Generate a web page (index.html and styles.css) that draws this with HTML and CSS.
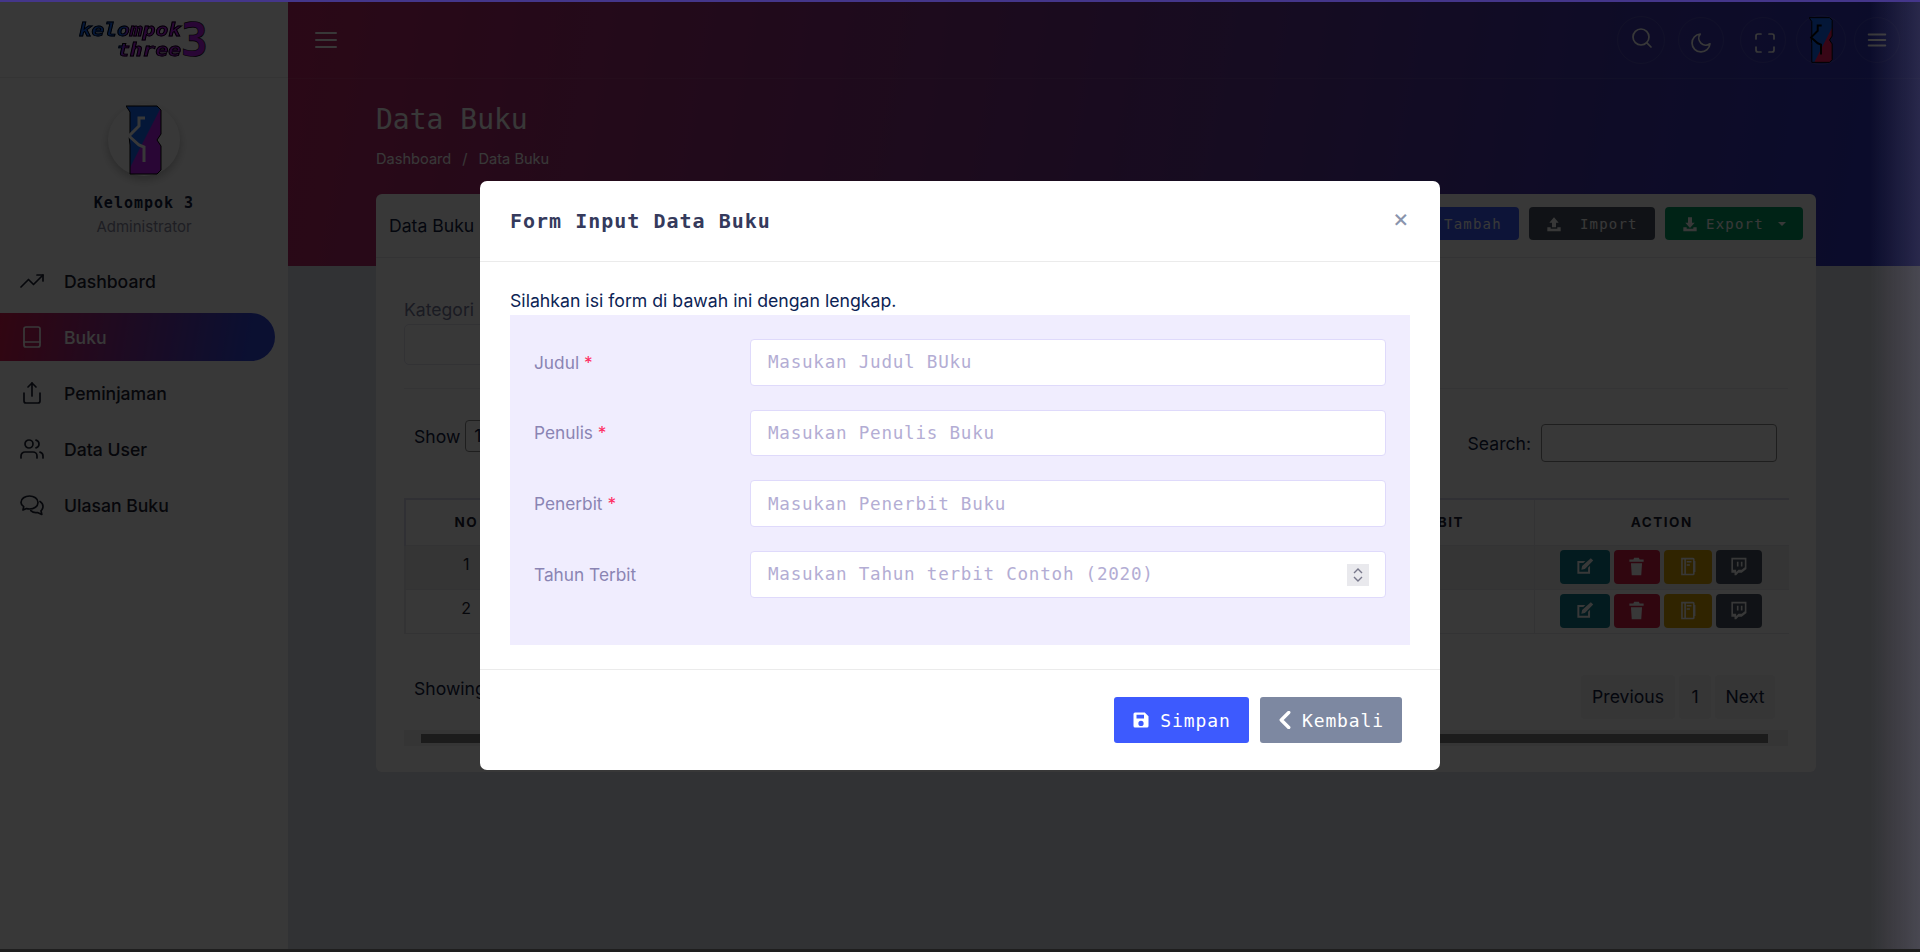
FILE: index.html
```html
<!DOCTYPE html>
<html lang="en">
<head>
  <meta charset="UTF-8" />
  <meta name="viewport" content="width=device-width, initial-scale=1.0"/>
  <title>Data Buku</title>
  <link rel="stylesheet" href="styles.css">
</head>
<body>
  <svg class="defs" width="0" height="0">
    <defs>
      <linearGradient id="emblemFill" x1="0" y1="0" x2="1" y2="1">
        <stop offset="0.5" stop-color="#1668ff"/>
        <stop offset="0.52" stop-color="#b91ef0"/>
      </linearGradient>
      <linearGradient id="emblemFillRed" x1="0" y1="0" x2="1" y2="1">
        <stop offset="0.6" stop-color="#1668ff"/>
        <stop offset="0.62" stop-color="#ff1f66"/>
      </linearGradient>
    </defs>
  </svg>

  <div class="layout">
    <aside class="sidebar">
      <div class="brand">
        <div class="wordmark">
          <div class="wordmark-text">
            <span>kelompok</span>
            <span>three</span>
          </div>
          <span class="wordmark-num">3</span>
        </div>
      </div>
      <div class="profile">
        <div class="avatar">
          <svg class="emblem" width="36" height="70" viewBox="0 0 36 70">
            <path d="M0 1H31L35 5V29L31 35L35 41V65L31 69H4V40L3 31L4 30V7z" fill="url(#emblemFill)" stroke="#000" stroke-width="1"/>
            <path d="M19 13H13V21L3 31L13 40L18 42V57" fill="none" stroke="#fff" stroke-width="3"/>
          </svg>
        </div>
        <div class="profile-name">Kelompok 3</div>
        <div class="profile-role">Administrator</div>
      </div>
      <nav class="menu">
        <a class="menu-item">
          <svg class="ico" viewBox="0 0 24 24"><polyline points="23 6 13.5 15.5 8.5 10.5 1 18"/><polyline points="17 6 23 6 23 12"/></svg>
          Dashboard
        </a>
        <a class="menu-item active">
          <svg class="ico" viewBox="0 0 24 24"><rect x="4" y="2" width="16" height="20" rx="2"/><line x1="4" y1="17" x2="20" y2="17"/></svg>
          Buku
        </a>
        <a class="menu-item">
          <svg class="ico" viewBox="0 0 24 24"><path d="M4 12v8a2 2 0 0 0 2 2h12a2 2 0 0 0 2-2v-8"/><polyline points="16 6 12 2 8 6"/><line x1="12" y1="2" x2="12" y2="15"/></svg>
          Peminjaman
        </a>
        <a class="menu-item">
          <svg class="ico" viewBox="0 0 24 24"><path d="M17 21v-2a4 4 0 0 0-4-4H5a4 4 0 0 0-4 4v2"/><circle cx="9" cy="7" r="4"/><path d="M23 21v-2a4 4 0 0 0-3-3.87"/><path d="M16 3.13a4 4 0 0 1 0 7.75"/></svg>
          Data User
        </a>
        <a class="menu-item">
          <svg class="ico" viewBox="0 0 24 24"><path d="M1 9.5C1 5.5 5 3 9.5 3S18 5.5 18 9.5 14 16 9.5 16c-1 0-2-.1-3-.5L3 17l.7-3.4C2 12.500 1 11 1 9.500z"/><path d="M20 8.500c2 1.200 3 3 3 5 0 1.700-.8 3.200-2 4.300l.8 3.700-4.300-2c-2.500.5-5-.2-6.700-1.800"/></svg>
          Ulasan Buku
        </a>
      </nav>
    </aside>

    <main class="main">
      <section class="hero">
        <div class="topbar">
          <svg class="ico burger" viewBox="0 0 24 24"><line x1="2" y1="5" x2="22" y2="5"/><line x1="2" y1="12" x2="22" y2="12"/><line x1="2" y1="19" x2="22" y2="19"/></svg>
          <div class="top-actions">
            <span class="round round-search"><svg class="ico" viewBox="0 0 24 24"><circle cx="11" cy="11" r="8"/><line x1="21" y1="21" x2="16.650" y2="16.650"/></svg></span>
            <span class="round round-moon"><svg class="ico" viewBox="0 0 24 24"><path d="M21 12.790A9 9 0 1 1 11.210 3 7 7 0 0 0 21 12.790z"/></svg></span>
            <span class="round round-full"><svg class="ico" viewBox="0 0 24 24"><path d="M8 3H5a2 2 0 0 0-2 2v3m18 0V5a2 2 0 0 0-2-2h-3m0 18h3a2 2 0 0 0 2-2v-3M3 16v3a2 2 0 0 0 2 2h3"/></svg></span>
            <span class="round round-user">
              <svg width="24" height="46" viewBox="0 0 36 70">
                <path d="M0 1H31L35 5V29L31 35L35 41V65L31 69H4V40L3 31L4 30V7z" fill="url(#emblemFillRed)" stroke="#000" stroke-width="1.500"/>
                <path d="M19 13H13V21L3 31L13 40L18 42V57" fill="none" stroke="#000" stroke-width="3"/>
              </svg>
            </span>
            <span class="round round-menu"><svg class="ico ico-sm" viewBox="0 0 24 24"><line x1="3" y1="6" x2="21" y2="6"/><line x1="3" y1="12" x2="21" y2="12"/><line x1="3" y1="18" x2="21" y2="18"/></svg></span>
          </div>
        </div>
        <h1 class="page-title">Data Buku</h1>
        <div class="crumbs"><span>Dashboard</span><span>/</span><span>Data Buku</span></div>
      </section>

      <section class="card">
        <div class="card-head">
          <span class="card-title">Data Buku</span>
          <div class="card-tools">
            <a class="btn btn-blue">Tambah</a>
            <a class="btn btn-dark">
              <svg class="fill-ico" viewBox="0 0 24 24"><path d="M12 2l7 8h-4v7H9v-7H5zM2 17h5v2h10v-2h5v6H2z"/></svg>
              &nbsp;Import
            </a>
            <a class="btn btn-green">
              <svg class="fill-ico" viewBox="0 0 24 24"><path d="M9 2h6v8h4l-7 8-7-8h4zM2 17h5v2h10v-2h5v6H2z"/></svg>
              Export <span class="caret"></span>
            </a>
          </div>
        </div>
        <div class="card-body">
          <div class="filter">
            <label class="filter-label">Kategori</label>
            <div class="filter-box"></div>
          </div>
          <div class="dt-top">
            <div class="dt-show">Show <span class="dt-select">10</span></div>
            <div class="dt-search">Search: <span class="dt-input"></span></div>
          </div>
          <table class="dt">
            <colgroup>
              <col class="c-no"><col class="c-wide"><col class="c-wide2"><col class="c-pub"><col class="c-act">
            </colgroup>
            <thead>
              <tr><th>NO</th><th>JUDUL</th><th>PENULIS</th><th>PENERBIT</th><th>ACTION</th></tr>
            </thead>
            <tbody>
              <tr class="odd">
                <td class="num">1</td><td></td><td></td><td></td>
                <td>
                  <div class="acts">
                    <span class="act act-teal"><svg class="fill-ico" viewBox="0 0 24 24"><path d="M3 5h10l-2.500 2.500H5.500v11h11v-5L19 11v10H3zM20 1.500l3 3L12.500 15 8 16l1-4.500z"/></svg></span>
                    <span class="act act-red"><svg class="fill-ico" viewBox="0 0 24 24"><path d="M9 1h6l1 2h5v3H3V3h5zM5 8h14l-1 15H6z"/></svg></span>
                    <span class="act act-yellow"><svg class="fill-ico" viewBox="0 0 24 24"><path fill-rule="evenodd" d="M4 1h15a2 2 0 0 1 2 2v2h1v14h-1v2a2 2 0 0 1-2 2H4zM6 3v18h2V3zM10 3v18h9V3zM11 5h6v2h-6zM11 9h4v2h-4z"/></svg></span>
                    <span class="act act-dark"><svg class="fill-ico" viewBox="0 0 24 24"><path fill-rule="evenodd" d="M3 1h19v14l-6 5h-4l-3 3H7v-3H3zM5 3v13h4v3l3-3h4l4-3V3zM10 6h2v6h-2zM15 6h2v6h-2z"/></svg></span>
                  </div>
                </td>
              </tr>
              <tr>
                <td class="num">2</td><td></td><td></td><td></td>
                <td>
                  <div class="acts">
                    <span class="act act-teal"><svg class="fill-ico" viewBox="0 0 24 24"><path d="M3 5h10l-2.500 2.500H5.500v11h11v-5L19 11v10H3zM20 1.500l3 3L12.500 15 8 16l1-4.500z"/></svg></span>
                    <span class="act act-red"><svg class="fill-ico" viewBox="0 0 24 24"><path d="M9 1h6l1 2h5v3H3V3h5zM5 8h14l-1 15H6z"/></svg></span>
                    <span class="act act-yellow"><svg class="fill-ico" viewBox="0 0 24 24"><path fill-rule="evenodd" d="M4 1h15a2 2 0 0 1 2 2v2h1v14h-1v2a2 2 0 0 1-2 2H4zM6 3v18h2V3zM10 3v18h9V3zM11 5h6v2h-6zM11 9h4v2h-4z"/></svg></span>
                    <span class="act act-dark"><svg class="fill-ico" viewBox="0 0 24 24"><path fill-rule="evenodd" d="M3 1h19v14l-6 5h-4l-3 3H7v-3H3zM5 3v13h4v3l3-3h4l4-3V3zM10 6h2v6h-2zM15 6h2v6h-2z"/></svg></span>
                  </div>
                </td>
              </tr>
            </tbody>
          </table>
          <div class="dt-bottom">
            <div class="dt-info">Showing 1 to 2 of 2 entries</div>
            <div class="pager">
              <span class="page page-prev">Previous</span>
              <span class="page page-num">1</span>
              <span class="page page-next">Next</span>
            </div>
          </div>
          <div class="hscroll"><div class="hscroll-thumb"></div></div>
        </div>
      </section>
    </main>
  </div>

  <div class="backdrop"></div>
  <div class="edge-glow"></div>
  <div class="top-line"></div>

  <div class="modal">
    <div class="modal-head">
      <h2 class="modal-title">Form Input Data Buku</h2>
      <span class="modal-close">&times;</span>
    </div>
    <div class="modal-body">
      <p class="modal-intro">Silahkan isi form di bawah ini dengan lengkap.</p>
      <form class="form-box">
        <div class="form-row">
          <label class="form-label">Judul <span class="req">*</span></label>
          <input class="form-input" type="text" placeholder="Masukan Judul BUku">
        </div>
        <div class="form-row">
          <label class="form-label">Penulis <span class="req">*</span></label>
          <input class="form-input" type="text" placeholder="Masukan Penulis Buku">
        </div>
        <div class="form-row">
          <label class="form-label">Penerbit <span class="req">*</span></label>
          <input class="form-input" type="text" placeholder="Masukan Penerbit Buku">
        </div>
        <div class="form-row">
          <label class="form-label">Tahun Terbit</label>
          <div class="number-wrap">
            <input class="form-input" type="text" placeholder="Masukan Tahun terbit Contoh (2020)">
            <span class="spinner">
              <svg width="10" height="16" viewBox="0 0 10 16"><polyline points="1 6 5 2 9 6"/><polyline points="1 10 5 14 9 10"/></svg>
            </span>
          </div>
        </div>
      </form>
    </div>
    <div class="modal-foot">
      <button class="mbtn mbtn-save" type="button">
        <svg class="mbtn-ico" viewBox="0 0 24 24"><path fill-rule="evenodd" d="M4 2h13l5 5v13a2 2 0 0 1-2 2H4a2 2 0 0 1-2-2V4a2 2 0 0 1 2-2zM6 5v5h10V5zM12 13a3.500 3.500 0 1 0 0 7 3.500 3.500 0 0 0 0-7z"/></svg>
        Simpan
      </button>
      <button class="mbtn mbtn-back" type="button">
        <svg class="mbtn-ico" viewBox="0 0 24 24"><polyline class="chev" points="17 2 7 12 17 22"/></svg>
        Kembali
      </button>
    </div>
  </div>
</body>
</html>
```

FILE: styles.css
```css
* {
  box-sizing: border-box;
}

body {
  margin: 0;
  height: 952px;
  overflow: hidden;
  font-family: Inter, Roboto, sans-serif;
  font-size: 16px;
  color: #12203f;
  background-color: #8a8a8a;
}

.defs {
  position: absolute;
}

.layout {
  display: flex;
  height: 949px;
  padding-top: 2px;
  background-color: #dfe1ea;
}

/* sidebar */
.sidebar {
  width: 288px;
  flex-shrink: 0;
  background-color: #fff;
}

.brand {
  height: 76px;
  padding-top: 17px;
  border-bottom: 1px solid #ececec;
}

.wordmark {
  display: flex;
  justify-content: center;
  align-items: center;
  height: 42px;
}

.wordmark-text {
  display: flex;
  flex-direction: column;
  align-items: flex-end;
  width: 100px;
  font-family: "DejaVu Sans Mono", monospace;
  font-weight: 700;
  font-style: italic;
  font-size: 17px;
  line-height: 20px;
  white-space: nowrap;
  color: transparent;
  background: linear-gradient(100deg, #1668ff 52%, #b91ef0 56%);
  -webkit-background-clip: text;
  background-clip: text;
  -webkit-text-stroke: 0.8px #000;
  transform: scaleX(1.25);
  transform-origin: right center;
}

.wordmark-num {
  width: 27px;
  font-family: "DejaVu Sans Mono", monospace;
  font-weight: 700;
  font-size: 46px;
  line-height: 40px;
  color: #b91ef0;
  -webkit-text-stroke: 0.6px #000;
}

.profile {
  display: flex;
  flex-direction: column;
  align-items: center;
  padding-top: 26px;
}

.avatar {
  width: 72px;
  height: 72px;
  border-radius: 50%;
  background-color: #fff;
  box-shadow: 0 4px 10px rgba(0, 0, 0, .25);
  display: flex;
  justify-content: center;
  align-items: center;
}

.emblem {
  margin-top: -2px;
  margin-bottom: -2px;
}

.profile-name {
  margin-top: 15px;
  font-family: "DejaVu Sans Mono", monospace;
  font-size: 15px;
  font-weight: 700;
  letter-spacing: 1px;
  line-height: 24px;
}

.profile-role {
  margin-top: 2px;
  font-size: 15px;
  line-height: 20px;
  color: #8a8aa0;
}

.menu {
  margin-top: 20px;
}

.menu-item {
  display: flex;
  align-items: center;
  gap: 20px;
  width: 275px;
  height: 48px;
  margin-bottom: 8px;
  padding-left: 20px;
  border-radius: 0 24px 24px 0;
  font-size: 17.6px;
  font-weight: 500;
  color: #1d2333;
}

.menu-item.active {
  color: #fff;
  background: linear-gradient(100deg, #e01a50, #3248e0 90%);
}

.ico {
  width: 24px;
  height: 24px;
  flex-shrink: 0;
  fill: none;
  stroke: currentColor;
  stroke-width: 1.7;
  stroke-linecap: round;
  stroke-linejoin: round;
}

/* header strip */
.main {
  flex: 1;
  min-width: 0;
  position: relative;
}

.hero {
  height: 264px;
  color: #fff;
  background: linear-gradient(100deg, #c02868 0%, #7a3488 45%, #423ab0 80%, #3038c8 100%);
}

.topbar {
  display: flex;
  justify-content: space-between;
  align-items: center;
  height: 77px;
  padding: 0 20px 0 26px;
  border-bottom: 1px solid rgba(255, 255, 255, .08);
}

.burger {
  stroke-width: 2;
}

.top-actions {
  display: flex;
  align-items: center;
  color: #fff;
}

.round {
  display: flex;
  justify-content: center;
  align-items: center;
  width: 46px;
  height: 46px;
  border: 1px solid rgba(255, 255, 255, .1);
  border-radius: 50%;
}

.round-search {
  width: 48px;
  height: 48px;
}

.round-search .ico {
  margin: -5px 0 0 2px;
}

.round-moon {
  margin-left: 13px;
}

.round-moon .ico {
  margin-top: 6px;
}

.round-full {
  margin-left: 16px;
}

.round-full .ico {
  margin: 6px 0 0 4px;
}

.round-user {
  width: 50px;
  height: 50px;
  margin-left: 10px;
}

.round-menu {
  margin-left: 8px;
}

.ico-sm {
  width: 22px;
  height: 22px;
  stroke-width: 2.2;
}

.page-title {
  margin: 21px 0 0 88px;
  font-family: "DejaVu Sans Mono", monospace;
  font-size: 28px;
  font-weight: 400;
  line-height: 40px;
}

.crumbs {
  display: flex;
  gap: 11px;
  margin: 9px 0 0 88px;
  font-size: 14.6px;
  line-height: 20px;
}

/* card */
.card {
  position: absolute;
  top: 192px;
  left: 88px;
  width: 1440px;
  height: 578px;
  border-radius: 6px;
  background-color: #fff;
}

.card-head {
  display: flex;
  justify-content: space-between;
  align-items: center;
  height: 64px;
  padding: 0 13px;
  border-bottom: 1px solid #e6e6ee;
}

.card-title {
  font-size: 17.6px;
}

.card-tools {
  display: flex;
  gap: 10px;
  margin-top: 11px;
  margin-bottom: 15px;
}

.btn {
  display: flex;
  justify-content: center;
  align-items: center;
  gap: 8px;
  height: 33px;
  border-radius: 4px;
  font-family: "DejaVu Sans Mono", monospace;
  font-size: 14px;
  letter-spacing: 1.2px;
  color: #fff;
}

.btn-blue {
  width: 160px;
  padding-left: 68px;
  background-color: #3d5afe;
}

.btn-dark {
  width: 126px;
  background-color: #4b5563;
}

.btn-green {
  width: 138px;
  background-color: #049f67;
}

.fill-ico {
  width: 16px;
  height: 16px;
  fill: currentColor;
}

.act .fill-ico {
  width: 19px;
  height: 19px;
  margin-top: -2px;
}

.caret {
  width: 0;
  height: 0;
  margin-left: 6px;
  border-top: 4px solid #fff;
  border-left: 4px solid transparent;
  border-right: 4px solid transparent;
}

.card-body {
  padding: 0 28px;
}

.filter {
  height: 131px;
  padding-top: 38px;
  border-bottom: 1px solid #ececf2;
}

.filter-label {
  display: block;
  font-size: 17.6px;
  line-height: 28px;
  color: #777a9c;
}

.filter-box {
  width: 500px;
  height: 41px;
  border: 1px solid #e3e3ee;
  border-radius: 5px;
}

.dt-top {
  display: flex;
  justify-content: space-between;
  height: 109px;
  padding: 31px 11px 0 10px;
  font-size: 17.6px;
}

.dt-show {
  display: flex;
  align-items: center;
  gap: 5px;
  height: 32px;
}

.dt-select {
  padding: 0 8px;
  height: 32px;
  line-height: 30px;
  border: 1px solid #888;
  border-radius: 4px;
}

.dt-search {
  display: flex;
  align-items: center;
  gap: 10px;
  height: 38px;
  margin-top: 4px;
}

.dt-input {
  width: 236px;
  height: 38px;
  border: 1px solid #888;
  border-radius: 4px;
}

.dt {
  width: 1384px;
  table-layout: fixed;
  border-collapse: collapse;
}

.c-no { width: 122px; }
.c-wide { width: 395px; }
.c-wide2 { width: 394px; }
.c-pub { width: 218px; }
.c-act { width: 255px; }

.dt th {
  height: 46px;
  font-size: 13.5px;
  font-weight: 700;
  letter-spacing: 1.5px;
  color: #1d2333;
  border-top: 2px solid #dcdcee;
  border-right: 1px solid #e6e6ee;
  border-bottom: 1px solid #e6e6ee;
}

.dt th:first-child {
  border-left: 2px solid #dcdcee;
}

.dt th:last-child {
  border-right: none;
}

.dt td {
  height: 44px;
  padding: 0;
  text-align: center;
  font-size: 16px;
  color: #1d2333;
  border-right: 1px solid #e6e6ee;
  border-bottom: 1px solid #e6e6ee;
}

.dt td:first-child {
  border-left: 2px solid #e6e6ee;
}

.dt td:last-child {
  border-right: none;
}

.dt td.num {
  padding-bottom: 7px;
}

.odd {
  background-color: #f2f2f2;
}

.acts {
  display: flex;
  gap: 4px;
  padding-left: 25px;
}

.act {
  display: flex;
  justify-content: center;
  align-items: center;
  height: 34px;
  border-radius: 4px;
  color: #fff;
}

.act-teal { width: 50px; background-color: #0f7c8c; }
.act-red { width: 46px; background-color: #d81b45; }
.act-yellow { width: 48px; background-color: #d9a404; }
.act-dark { width: 46px; background-color: #4b5563; }

.dt-bottom {
  display: flex;
  justify-content: space-between;
  align-items: flex-start;
  height: 96px;
  padding: 41px 13px 0 10px;
  font-size: 17.6px;
}

.dt-info {
  margin-top: 3px;
}

.pager {
  display: flex;
  gap: 4px;
}

.page {
  display: flex;
  justify-content: center;
  align-items: center;
  height: 44px;
  border-radius: 4px;
  background-color: #f3f3f3;
}

.page-prev { width: 94px; }
.page-num { width: 32px; }
.page-next { width: 60px; }

.hscroll {
  height: 16px;
  padding: 4px 20px 0 17px;
  background-color: #f1f1f1;
}

.hscroll-thumb {
  height: 9px;
  background-color: #7d7d7d;
}

/* dim layer */
.backdrop {
  position: fixed;
  inset: 0;
  z-index: 10;
  background-color: rgba(0, 0, 0, .78);
}

.edge-glow {
  position: fixed;
  top: 0;
  right: 0;
  bottom: 3px;
  width: 50px;
  z-index: 11;
  background: linear-gradient(90deg, rgba(255, 255, 255, 0), rgba(190, 180, 230, .17));
}

.top-line {
  position: fixed;
  top: 0;
  left: 0;
  right: 0;
  height: 2px;
  z-index: 11;
  background-color: #44368a;
}

/* modal */
.modal {
  position: fixed;
  top: 181px;
  left: 480px;
  width: 960px;
  height: 589px;
  z-index: 12;
  border-radius: 7px;
  background-color: #fff;
}

.modal-head {
  display: flex;
  justify-content: space-between;
  align-items: center;
  height: 81px;
  padding: 0 31px 0 30px;
  border-bottom: 1px solid #ebebeb;
}

.modal-title {
  margin: 0;
  font-family: "DejaVu Sans Mono", monospace;
  font-size: 20px;
  font-weight: 700;
  letter-spacing: 1px;
  color: #353a5c;
}

.modal-close {
  margin: -7px 0 0 0;
  font-size: 25px;
  color: #8a94ad;
}

.modal-body {
  height: 408px;
  padding: 25px 30px 0;
  border-bottom: 1px solid #ebebeb;
}

.modal-intro {
  margin: 0;
  height: 28px;
  line-height: 28px;
  font-size: 17.7px;
  color: #0c2354;
}

.form-box {
  height: 330px;
  padding: 24px 24px 0;
  background-color: #f0edfe;
}

.form-row {
  display: grid;
  grid-template-columns: 216px 1fr;
  align-items: center;
  margin-bottom: 24px;
}

.form-label {
  font-size: 17.3px;
  color: #8a84b3;
}

.req {
  color: #ff2e63;
}

.form-input {
  width: 100%;
  height: 46.67px;
  padding: 0 17px;
  border: 1px solid #dfdafb;
  border-radius: 4px;
  outline: none;
  background-color: #fff;
  font-family: "DejaVu Sans Mono", monospace;
  font-size: 17.6px;
  letter-spacing: .75px;
}

.form-input::placeholder {
  color: #b3add4;
  opacity: 1;
}

.number-wrap {
  position: relative;
}

.spinner {
  position: absolute;
  top: 13px;
  right: 17px;
  display: flex;
  justify-content: center;
  align-items: center;
  width: 22px;
  height: 22px;
  background-color: #e9e9ed;
}

.spinner svg {
  fill: none;
  stroke: #77778a;
  stroke-width: 1.4;
}

.modal-foot {
  display: flex;
  justify-content: flex-end;
  gap: 11px;
  padding: 27px 38px 0 0;
}

.mbtn {
  display: flex;
  justify-content: center;
  align-items: center;
  gap: 10px;
  height: 46px;
  border: none;
  border-radius: 3px;
  color: #fff;
  font-family: "DejaVu Sans Mono", monospace;
  font-size: 18px;
  letter-spacing: .9px;
}

.mbtn-save {
  width: 135px;
  background-color: #3d5afe;
}

.mbtn-back {
  width: 142px;
  gap: 8px;
  padding-right: 8px;
  background-color: #7d88a1;
}

.mbtn-ico {
  width: 18px;
  height: 18px;
  fill: currentColor;
}

.chev {
  fill: none;
  stroke: currentColor;
  stroke-width: 4.5;
  stroke-linecap: round;
  stroke-linejoin: round;
}
```
